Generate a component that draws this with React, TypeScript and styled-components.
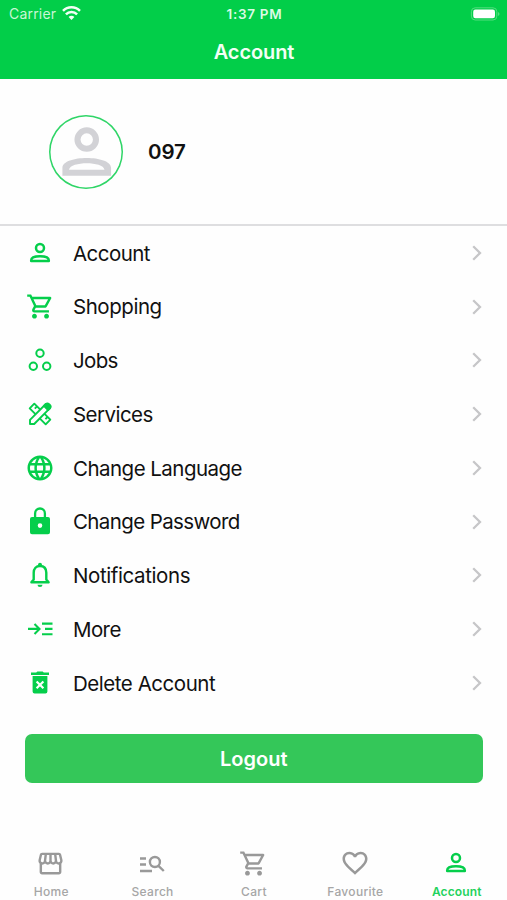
import React from 'react';
import styled, { createGlobalStyle } from 'styled-components';
import {
  MdOutlineShoppingCart,
  MdLanguage,
  MdOutlineStorefront,
  MdFavoriteBorder,
} from 'react-icons/md';

const GlobalStyle = createGlobalStyle`
  * { box-sizing: border-box; }
  body { margin: 0; background: #fff; }
  svg { display: block; flex: none; }
`;

const Screen = styled.div`
  width: 507px;
  height: 900px;
  display: flex;
  flex-direction: column;
  overflow: hidden;
  background: #fefefe;
  color: #111;
  font-family: Inter, 'Liberation Sans', sans-serif;
`;

const Header = styled.header`
  height: 79px;
  flex: none;
  background: #02ce49;
  color: #f2fff5;
`;

const StatusBar = styled.div`
  height: 27px;
  padding: 0 7px 0 9px;
  display: grid;
  grid-template-columns: 1fr auto 1fr;
  align-items: center;
  font-size: 14px;
`;

const Carrier = styled.div`
  display: flex;
  align-items: center;
  gap: 6px;
  letter-spacing: 0.2px;
  color: #c9f6d5;
`;

const Clock = styled.div`
  padding-top: 1px;
  font-size: 13.5px;
  font-weight: 600;
  letter-spacing: 0.7px;
  color: #dcfae4;
`;

const Battery = styled.svg`
  justify-self: end;
`;

const Title = styled.h1`
  margin: 0;
  height: 52px;
  padding-left: 1px;
  line-height: 51px;
  text-align: center;
  font-size: 20px;
  font-weight: 600;
  letter-spacing: -0.1px;
`;

const Profile = styled.section`
  height: 147px;
  flex: none;
  display: flex;
  align-items: center;
  gap: 25px;
  padding-left: 49px;
  border-bottom: 2px solid #dedee0;
`;

const Avatar = styled.div`
  width: 74px;
  height: 74px;
  display: grid;
  place-items: center;
  border-radius: 50%;
  box-shadow: inset 0 0 0 1.5px #2fd567;
  color: #d2d2d6;
`;

const Name = styled.div`
  font-size: 20.5px;
  font-weight: 600;
  letter-spacing: -0.1px;
`;

const Menu = styled.nav`
  flex: none;
  display: flex;
  flex-direction: column;
`;

const MenuRow = styled.a`
  height: 53.75px;
  display: grid;
  grid-template-columns: 30px 1fr auto;
  align-items: center;
  column-gap: 18px;
  padding: 0 24px 0 25px;
  color: #111;
`;

const MenuIcon = styled.span`
  display: grid;
  place-items: center;
  color: #05ce4b;
`;

const Label = styled.span<{ $spacing: number }>`
  padding-top: 0.6px;
  font-size: 20.5px;
  letter-spacing: ${(p) => p.$spacing}px;
`;

const LogoutButton = styled.button`
  flex: none;
  height: 49px;
  margin: 24px 24.5px 0 25px;
  padding: 1px 0 0;
  border: 0;
  border-radius: 7px;
  background: #34c759;
  color: #fff;
  font: 600 20px Inter, sans-serif;
  letter-spacing: 0;
`;

const TabBar = styled.nav`
  margin-top: auto;
  height: 52px;
  flex: none;
  display: grid;
  grid-template-columns: repeat(5, 1fr);
`;

const Tab = styled.a<{ $active?: boolean }>`
  display: flex;
  flex-direction: column;
  align-items: center;
  gap: 6px;
  color: ${(p) => (p.$active ? '#05ce4b' : '#999')};
`;

const TabIcon = styled.span`
  height: 30px;
  display: grid;
  place-items: center;
`;

const TabLabel = styled.span<{ $active?: boolean }>`
  padding-left: 1px;
  color: ${(p) => (p.$active ? '#1fd25d' : '#a6a6a6')};
  font-size: 12px;
  line-height: 15px;
  font-weight: ${(p) => (p.$active ? 600 : 500)};
  letter-spacing: ${(p) => (p.$active ? 0.15 : 0.3)}px;
`;

interface GlyphProps {
  size?: number;
}

type Glyph = React.ComponentType<GlyphProps>;

const Canvas = ({ size = 30, children }: GlyphProps & { children: React.ReactNode }) => (
  <svg width={size} height={size} viewBox="0 0 30 30" fill="none" stroke="currentColor">
    {children}
  </svg>
);

const PersonGlyph: Glyph = ({ size }) => (
  <Canvas size={size}>
    <circle cx="15" cy="10" r="4" strokeWidth="2.5" />
    <path
      d="M6.2 23.1v-.9C6.2 16.9 23.8 16.9 23.8 22.2v.9z"
      strokeWidth="2.5"
      strokeLinejoin="round"
    />
  </Canvas>
);

const AvatarGlyph: Glyph = ({ size }) => (
  <Canvas size={size}>
    <circle cx="15.1" cy="10.1" r="3.8" strokeWidth="2.5" />
    <path
      d="M5.1 25v-3.3C5.1 16.3 25.1 16.3 25.1 21.7V25zM7.8 22.5h14.6C21.8 19 8.4 19 7.8 22.5z"
      fill="currentColor"
      fillRule="evenodd"
      stroke="none"
    />
  </Canvas>
);

const CirclesGlyph: Glyph = ({ size }) => (
  <Canvas size={size}>
    <g strokeWidth="2">
      <circle cx="15" cy="8.3" r="3.7" />
      <circle cx="8.3" cy="21.2" r="3.7" />
      <circle cx="21.7" cy="21.2" r="3.7" />
    </g>
  </Canvas>
);

const ToolsGlyph: Glyph = ({ size }) => (
  <Canvas size={size}>
    <g strokeWidth="1.9" strokeLinejoin="round">
      <path d="M9.3 4.7 25.3 20.7 20.7 25.3 4.7 9.3z" />
      <path d="m12 7.4-2.2 2.2M22.6 18l-2.2 2.2" />
      <path d="M20.8 5 25 9.2 9.2 25H5v-4.2z" fill="#fefefe" />
      <path d="M20.7 5.2q1.7-1.6 3.4 0l.8.8q1.6 1.6 0 3.3l-1.8 1.8-4.2-4.2z" fill="currentColor" />
    </g>
  </Canvas>
);

const LockGlyph: Glyph = ({ size }) => (
  <Canvas size={size}>
    <path d="M10.1 11V6.4a4.9 4.9 0 0 1 9.8 0V11" strokeWidth="2.3" />
    <path
      fillRule="evenodd"
      d="M7 10h16a2 2 0 0 1 2 2v13.2a2 2 0 0 1-2 2H7a2 2 0 0 1-2-2V12a2 2 0 0 1 2-2zm8 6.3a2.3 2.3 0 1 0 0 4.6 2.3 2.3 0 0 0 0-4.6z"
      fill="currentColor"
      stroke="none"
    />
  </Canvas>
);

const BellGlyph: Glyph = ({ size }) => (
  <Canvas size={size}>
    <path
      d="M8.7 19.4v-6.6C8.7 8.4 11.2 6 15 6s6.3 2.4 6.3 6.8v6.6l2.3 2.8H6.4z"
      strokeWidth="2.4"
      strokeLinejoin="round"
    />
    <path
      d="M13 5.6V4.7a2 2 0 0 1 4 0v.9zM12.5 24.8h5a2.5 2.3 0 0 1-5 0z"
      fill="currentColor"
      stroke="none"
    />
  </Canvas>
);

const MoreGlyph: Glyph = ({ size }) => (
  <Canvas size={size}>
    <path d="M3 14.9h11M9.5 9.9l5 5-5 5M17 9.6h10.5M20 14.9h7.5M17 20.2h10.5" strokeWidth="2.1" />
  </Canvas>
);

const TrashGlyph: Glyph = ({ size }) => (
  <Canvas size={size}>
    <path
      d="M6 4.6h5.2l1.2-1h5.2l1.2 1H24V7H6zM7.6 8h14.8v15.6a2 2 0 0 1-2 2H9.6a2 2 0 0 1-2-2z"
      fill="currentColor"
      stroke="none"
    />
    <path d="m11.6 13.5 6.8 6.8m0-6.8-6.8 6.8" stroke="#fefefe" strokeWidth="2.2" />
  </Canvas>
);

const SearchListGlyph: Glyph = ({ size }) => (
  <Canvas size={size}>
    <g strokeWidth="2.4">
      <path d="M3 10.5h6M3 16.5h6M3 23h12M21.2 17.6l5.6 5.4" />
      <circle cx="17.9" cy="14" r="5" />
    </g>
  </Canvas>
);

const WifiGlyph = () => (
  <svg width="19" height="15" viewBox="0 0 19 15" fill="none" stroke="#f4fff6" strokeWidth="2.5">
    <path d="M1 4.9a12 12 0 0 1 17 0" />
    <path d="M3.9 8.3a7.8 7.8 0 0 1 11.2 0" />
    <path d="M6.6 11.1a3.9 3.9 0 0 1 5.8 0L9.5 14z" fill="#f4fff6" stroke="none" />
  </svg>
);

const BatteryGlyph = () => (
  <Battery width="30" height="14" viewBox="0 0 30 14">
    <rect x="1.4" y="0.8" width="25.4" height="12.2" rx="3.8" fill="none" stroke="#53de7f" />
    <rect x="3.2" y="2.6" width="21.8" height="8.6" rx="2.2" fill="#fff" />
    <path d="M27.9 5v4q1.6-.7 1.6-2t-1.6-2z" fill="#53de7f" />
  </Battery>
);

const Chevron = () => (
  <svg width="12" height="16" viewBox="0 0 12 16" fill="none" stroke="#c6c6c8" strokeWidth="2.3">
    <path d="M2.2 1.2 9 8l-6.8 6.8" />
  </svg>
);

interface MenuItem {
  label: string;
  icon: Glyph;
  size: number;
  spacing: number;
}

const menuItems: MenuItem[] = [
  { label: 'Account', icon: PersonGlyph, size: 30, spacing: -0.55 },
  { label: 'Shopping', icon: MdOutlineShoppingCart, size: 29, spacing: -0.45 },
  { label: 'Jobs', icon: CirclesGlyph, size: 30, spacing: -0.65 },
  { label: 'Services', icon: ToolsGlyph, size: 30, spacing: -0.55 },
  { label: 'Change Language', icon: MdLanguage, size: 30, spacing: -0.53 },
  { label: 'Change Password', icon: LockGlyph, size: 30, spacing: -0.62 },
  { label: 'Notifications', icon: BellGlyph, size: 30, spacing: -0.4 },
  { label: 'More', icon: MoreGlyph, size: 30, spacing: -0.6 },
  { label: 'Delete Account', icon: TrashGlyph, size: 30, spacing: -0.46 },
];

const tabs: { label: string; icon: Glyph; size: number }[] = [
  { label: 'Home', icon: MdOutlineStorefront, size: 29 },
  { label: 'Search', icon: SearchListGlyph, size: 30 },
  { label: 'Cart', icon: MdOutlineShoppingCart, size: 29 },
  { label: 'Favourite', icon: MdFavoriteBorder, size: 30 },
  { label: 'Account', icon: PersonGlyph, size: 30 },
];

export default function App() {
  return (
    <Screen>
      <GlobalStyle />
      <Header>
        <StatusBar>
          <Carrier>
            Carrier
            <WifiGlyph />
          </Carrier>
          <Clock>1:37 PM</Clock>
          <BatteryGlyph />
        </StatusBar>
        <Title>Account</Title>
      </Header>
      <Profile>
        <Avatar>
          <AvatarGlyph size={73} />
        </Avatar>
        <Name>097</Name>
      </Profile>
      <Menu>
        {menuItems.map(({ label, icon: Icon, size, spacing }) => (
          <MenuRow key={label}>
            <MenuIcon>
              <Icon size={size} />
            </MenuIcon>
            <Label $spacing={spacing}>{label}</Label>
            <Chevron />
          </MenuRow>
        ))}
      </Menu>
      <LogoutButton>Logout</LogoutButton>
      <TabBar>
        {tabs.map(({ label, icon: Icon, size }) => (
          <Tab key={label} $active={label === 'Account'}>
            <TabIcon>
              <Icon size={size} />
            </TabIcon>
            <TabLabel $active={label === 'Account'}>{label}</TabLabel>
          </Tab>
        ))}
      </TabBar>
    </Screen>
  );
}
